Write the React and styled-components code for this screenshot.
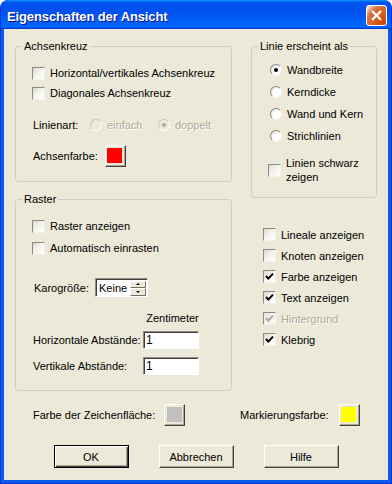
import React from "react";
import styled, { createGlobalStyle, css } from "styled-components";

const GlobalStyle = createGlobalStyle`
  html, body { margin: 0; padding: 0; background: #ffffff; }
  body {
    font-family: "Liberation Sans", Arial, sans-serif;
    font-size: 11px;
    color: #000;
  }
  #root { width: 392px; height: 484px; }
`;

const Window = styled.div`
  width: 392px;
  height: 484px;
  box-sizing: border-box;
  display: flex;
  flex-direction: column;
  border-radius: 8px 8px 0 0;
  overflow: hidden;
  background: #0831d9;
  padding: 0 1px 1px 1px;
`;

const TitleBar = styled.div`
  height: 29px;
  flex: none;
  box-sizing: border-box;
  display: flex;
  align-items: center;
  justify-content: space-between;
  padding: 1px 4px 0 6px;
  border-radius: 7px 7px 0 0;
  background: linear-gradient(
    180deg,
    #0997ff,
    #0053ee 8%,
    #0050ee 40%,
    #0066ff 88%,
    #0066ff 93%,
    #005bff 95%,
    #003dd7 96%,
    #003dd7
  );
`;

const Title = styled.span`
  font-family: "Liberation Sans", Arial, sans-serif;
  font-weight: bold;
  font-size: 13px;
  letter-spacing: -0.12px;
  color: #fff;
  text-shadow: 1px 1px #0f1089;
  padding-top: 2px;
`;

const CloseButton = styled.div`
  width: 21px;
  height: 21px;
  box-sizing: border-box;
  border: 1px solid #fff;
  border-radius: 3px;
  display: flex;
  align-items: center;
  justify-content: center;
  background: radial-gradient(
    circle at 90% 90%,
    #cc4600 0%,
    #dc6527 55%,
    #cd7546 70%,
    #ffccb2 90%,
    #fff 100%
  );
`;

const Body = styled.div`
  flex: 1;
  display: flex;
  flex-direction: column;
  background: #ece9d8;
  border: 3px solid #0a5beb;
  border-top: 0;
`;

const Columns = styled.div`
  display: flex;
  gap: 19px;
  padding: 11px 0 0 11px;
`;

const Column = styled.div`
  width: ${(p) => p.$w}px;
  display: flex;
  flex-direction: column;
  gap: ${(p) => p.$gap || 0}px;
`;

const Group = styled.fieldset`
  margin: 0;
  padding: 0;
  min-width: 0;
  box-sizing: border-box;
  height: ${(p) => p.$h}px;
  border: 1px solid #d0d0bf;
  border-radius: 3px;
`;

const Legend = styled.legend`
  margin-left: 6px;
  padding: 0 2px;
  line-height: 13px;
  font-size: 11px;
  color: #000;
`;

const GroupBody = styled.div`
  display: flex;
  flex-direction: column;
  padding: ${(p) => p.$pt}px 0 0 ${(p) => p.$pl}px;
`;

const Row = styled.div`
  display: flex;
  align-items: center;
  height: ${(p) => p.$h}px;
  margin-top: ${(p) => p.$mt || 0}px;
  margin-left: ${(p) => p.$ml || 0}px;
  gap: ${(p) => p.$gap || 0}px;
`;

const OptionLabel = styled.label`
  display: flex;
  align-items: center;
  gap: ${(p) => p.$gap ?? 5}px;
  height: ${(p) => p.$h}px;
  margin-top: ${(p) => p.$mt || 0}px;
  margin-left: ${(p) => p.$ml || 0}px;
  color: ${(p) => (p.$disabled ? "#aca899" : "#000")};
  ${(p) =>
    p.$disabled &&
    css`
      text-shadow: 1px 1px #fff;
    `}
  line-height: 14px;
`;

const Box = styled.span`
  width: 13px;
  height: 13px;
  flex: none;
  box-sizing: border-box;
  border: 1px solid;
  border-color: #8c8b84 #f2f1ea #f2f1ea #8c8b84;
  background: ${(p) =>
    p.$disabled
      ? "linear-gradient(135deg, #e6e4da 0%, #f4f3ee 60%, #fbfbf8 100%)"
      : "linear-gradient(135deg, #d8d7cf 0%, #f3f2ec 45%, #ffffff 100%)"};
  display: flex;
  align-items: center;
  justify-content: center;
`;

const RadioCircle = styled.span`
  width: 12px;
  height: 12px;
  flex: none;
  box-sizing: border-box;
  border-radius: 50%;
  border: 1px solid;
  border-color: ${(p) =>
    p.$disabled ? "#c9c6b8 #ffffff #ffffff #c9c6b8" : "#8c8b84 #f2f1ea #f2f1ea #8c8b84"};
  background: ${(p) =>
    p.$disabled
      ? "#ece9d8"
      : "radial-gradient(circle at 65% 65%, #ffffff 45%, #d6d5cd 100%)"};
  display: flex;
  align-items: center;
  justify-content: center;
  &::after {
    content: "";
    display: ${(p) => (p.$checked ? "block" : "none")};
    width: 4px;
    height: 4px;
    border-radius: 50%;
    background: ${(p) => (p.$disabled ? "#aca899" : "#000")};
  }
`;

const Check = ({ disabled }) => (
  <svg width="9" height="9" viewBox="0 0 9 9">
    <polyline
      points="1,4 3.3,6.6 8,1.6"
      fill="none"
      stroke={disabled ? "#aca899" : "#000"}
      strokeWidth="2"
    />
  </svg>
);

const CheckOption = ({ label, checked, disabled, h = 20, mt, ml, gap }) => (
  <OptionLabel $h={h} $mt={mt} $ml={ml} $gap={gap} $disabled={disabled}>
    <Box $disabled={disabled}>{checked && <Check disabled={disabled} />}</Box>
    <span>{label}</span>
  </OptionLabel>
);

const RadioOption = ({ label, checked, disabled, h = 22 }) => (
  <OptionLabel $h={h} $gap={5} $disabled={disabled}>
    <RadioCircle $checked={checked} $disabled={disabled} />
    <span>{label}</span>
  </OptionLabel>
);

const LineTypeGrid = styled.div`
  display: grid;
  grid-template-columns: 57px 68px auto;
  align-items: center;
  height: 20px;
  margin-top: 12px;
  margin-left: 1px;
`;

const ColorButton = styled.div`
  width: 21px;
  height: 22px;
  box-sizing: border-box;
  flex: none;
  display: flex;
  align-items: center;
  justify-content: center;
  background: #ece9d8;
  border: 1px solid;
  border-color: #ffffff #404040 #404040 #ffffff;
  box-shadow: inset -1px -1px #aca899;
`;

const Swatch = styled.span`
  width: 15px;
  height: 15px;
  margin: 0 1px 1px 0;
  background: ${(p) => p.$color};
`;

const Spinner = styled.div`
  width: 53px;
  height: 19px;
  box-sizing: border-box;
  display: flex;
  align-items: center;
  background: #fff;
  border: 1px solid;
  border-color: #8e8c84 #ffffff #ffffff #8e8c84;
  box-shadow: inset 1px 1px #404040;
  padding: 1px 1px 0 3px;
`;

const SpinText = styled.span`
  flex: 1;
  font-size: 11px;
`;

const SpinButtons = styled.div`
  width: 16px;
  height: 15px;
  display: flex;
  flex-direction: column;
`;

const SpinButton = styled.div`
  flex: 1;
  box-sizing: border-box;
  background: #ece9d8;
  border: 1px solid;
  border-color: #ffffff #716f64 #716f64 #ffffff;
  display: flex;
  align-items: center;
  justify-content: center;
  &::after {
    content: "";
    width: 0;
    height: 0;
    border-left: 2px solid transparent;
    border-right: 2px solid transparent;
    ${(p) =>
      p.$up
        ? css`
            border-bottom: 2px solid #000;
          `
        : css`
            border-top: 2px solid #000;
          `}
  }
`;

const DistanceGrid = styled.div`
  display: grid;
  grid-template-columns: 110px 56px;
  grid-auto-rows: auto;
  row-gap: 8px;
  align-items: center;
  margin-top: 15px;
  margin-left: 1px;
`;

const UnitHeader = styled.span`
  grid-column: 2;
  text-align: center;
  font-size: 11px;
  line-height: 13px;
  margin-bottom: -2px;
  padding-left: 3px;
`;

const NumberField = styled.input`
  width: 56px;
  height: 18px;
  box-sizing: border-box;
  margin: 0;
  padding: 0 0 0 2px;
  font-family: "Liberation Sans", Arial, sans-serif;
  font-size: 12px;
  color: #000;
  background: #fff;
  border: 1px solid;
  border-color: #8e8c84 #ffffff #ffffff #8e8c84;
  box-shadow: inset 1px 1px #404040;
  outline: none;
`;

const RightList = styled.div`
  display: flex;
  flex-direction: column;
  margin-top: 26px;
  padding-left: 12px;
`;

const ColorRow = styled.div`
  display: grid;
  grid-template-columns: 207px auto;
  align-items: center;
  height: 22px;
  margin-top: 13px;
  padding-left: 29px;
`;

const ColorField = styled.div`
  display: flex;
  align-items: center;
  gap: ${(p) => p.$gap}px;
`;

const ButtonRow = styled.div`
  display: flex;
  justify-content: center;
  gap: 30px;
  margin-top: 19px;
`;

const PushButton = styled.button`
  width: 75px;
  height: 23px;
  box-sizing: border-box;
  padding: 0;
  font-family: "Liberation Sans", Arial, sans-serif;
  font-size: 11px;
  color: #000;
  background: #ece9d8;
  border: 1px solid;
  border-color: #ffffff #404040 #404040 #ffffff;
  box-shadow: inset -1px -1px #aca899;
  ${(p) =>
    p.$default &&
    css`
      border-color: #000;
      box-shadow: inset 1px 1px #fff, inset -1px -1px #404040, inset -2px -2px #aca899;
    `}
`;

export default function App() {
  return (
    <>
      <GlobalStyle />
      <Window>
        <TitleBar>
          <Title>Eigenschaften der Ansicht</Title>
          <CloseButton>
            <svg width="13" height="13" viewBox="0 0 13 13">
              <path d="M2 2 L11 11 M11 2 L2 11" stroke="#fff" strokeWidth="2.4" />
            </svg>
          </CloseButton>
        </TitleBar>
        <Body>
          <Columns>
            <Column $w={217} $gap={11}>
              <Group $h={142}>
                <Legend>Achsenkreuz</Legend>
                <GroupBody $pt={10} $pl={16}>
                  <CheckOption label="Horizontal/vertikales Achsenkreuz" />
                  <CheckOption label="Diagonales Achsenkreuz" />
                  <LineTypeGrid>
                    <span>Linienart:</span>
                    <RadioOption label="einfach" disabled h={20} />
                    <RadioOption label="doppelt" disabled checked h={20} />
                  </LineTypeGrid>
                  <Row $h={22} $mt={10} $ml={1} $gap={7}>
                    <span>Achsenfarbe:</span>
                    <ColorButton>
                      <Swatch $color="#ff0000" />
                    </ColorButton>
                  </Row>
                </GroupBody>
              </Group>
              <Group $h={198}>
                <Legend>Raster</Legend>
                <GroupBody $pt={9} $pl={16}>
                  <CheckOption label="Raster anzeigen" h={22} />
                  <CheckOption label="Automatisch einrasten" h={22} />
                  <Row $h={19} $mt={19} $ml={2} $gap={6}>
                    <span>Karogröße:</span>
                    <Spinner>
                      <SpinText>Keine</SpinText>
                      <SpinButtons>
                        <SpinButton $up />
                        <SpinButton />
                      </SpinButtons>
                    </Spinner>
                  </Row>
                  <DistanceGrid>
                    <UnitHeader>Zentimeter</UnitHeader>
                    <span>Horizontale Abstände:</span>
                    <NumberField defaultValue="1" readOnly />
                    <span>Vertikale Abstände:</span>
                    <NumberField defaultValue="1" readOnly />
                  </DistanceGrid>
                </GroupBody>
              </Group>
            </Column>
            <Column $w={126}>
              <Group $h={158}>
                <Legend>Linie erscheint als</Legend>
                <GroupBody $pt={6} $pl={18}>
                  <RadioOption label="Wandbreite" checked />
                  <RadioOption label="Kerndicke" />
                  <RadioOption label="Wand und Kern" />
                  <RadioOption label="Strichlinien" />
                  <CheckOption
                    label={
                      <>
                        Linien schwarz
                        <br />
                        zeigen
                      </>
                    }
                    h={28}
                    mt={9}
                    ml={-2}
                  />
                </GroupBody>
              </Group>
              <RightList>
                <CheckOption label="Lineale anzeigen" h={21} />
                <CheckOption label="Knoten anzeigen" h={21} />
                <CheckOption label="Farbe anzeigen" checked h={21} />
                <CheckOption label="Text anzeigen" checked h={21} />
                <CheckOption label="Hintergrund" checked disabled h={21} />
                <CheckOption label="Klebrig" checked h={21} />
              </RightList>
            </Column>
          </Columns>
          <ColorRow>
            <ColorField $gap={9}>
              <span>Farbe der Zeichenfläche:</span>
              <ColorButton>
                <Swatch $color="#c0c0c0" />
              </ColorButton>
            </ColorField>
            <ColorField $gap={10}>
              <span>Markierungsfarbe:</span>
              <ColorButton>
                <Swatch $color="#ffff00" />
              </ColorButton>
            </ColorField>
          </ColorRow>
          <ButtonRow>
            <PushButton $default>OK</PushButton>
            <PushButton>Abbrechen</PushButton>
            <PushButton>Hilfe</PushButton>
          </ButtonRow>
        </Body>
      </Window>
    </>
  );
}
